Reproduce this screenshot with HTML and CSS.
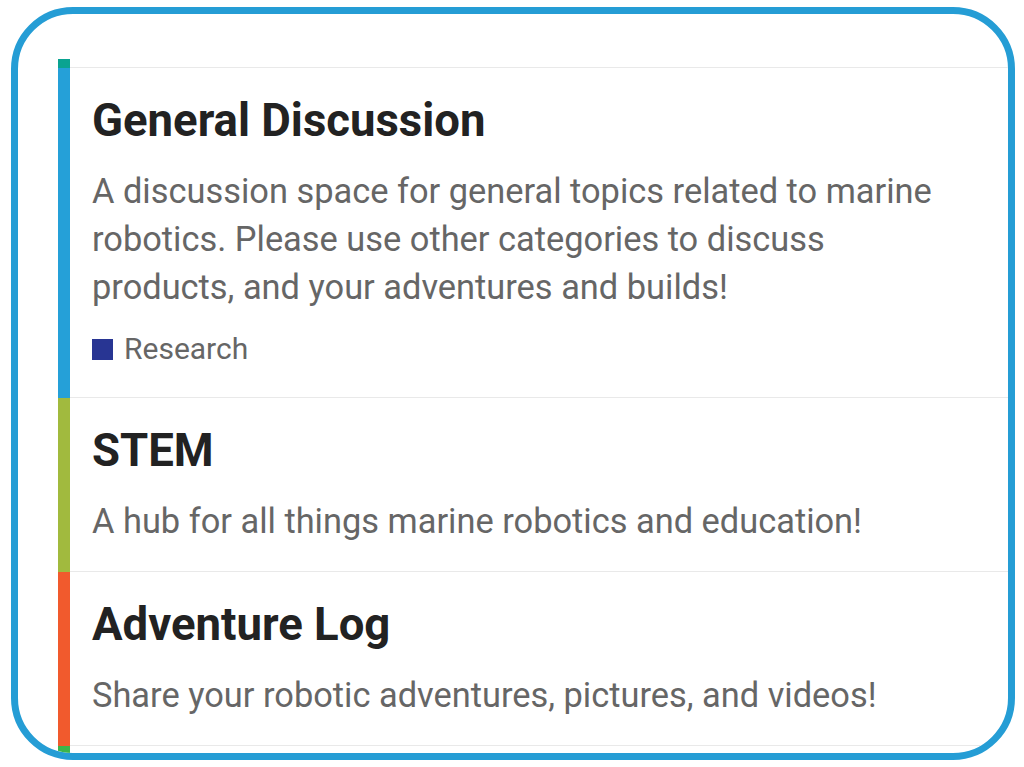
FILE: index.html
```html
<!DOCTYPE html>
<html>
<head>
<meta charset="utf-8">
<link rel="stylesheet" href="styles.css">
</head>
<body>
<div class="frame">
  <div class="list">
    <div class="row row-stub">
      <div class="bar bar-teal"></div>
      <div class="cell"></div>
    </div>
    <div class="row">
      <div class="bar bar-blue"></div>
      <div class="cell">
        <h3 class="title">General Discussion</h3>
        <p class="desc">A discussion space for general topics related to marine robotics. Please use other categories to discuss products, and your adventures and builds!</p>
        <div class="sub"><span class="swatch"></span><span class="sub-name">Research</span></div>
      </div>
    </div>
    <div class="row">
      <div class="bar bar-lime"></div>
      <div class="cell">
        <h3 class="title">STEM</h3>
        <p class="desc">A hub for all things marine robotics and education!</p>
      </div>
    </div>
    <div class="row">
      <div class="bar bar-orange"></div>
      <div class="cell">
        <h3 class="title">Adventure Log</h3>
        <p class="desc">Share your robotic adventures, pictures, and videos!</p>
      </div>
    </div>
    <div class="row">
      <div class="bar bar-green"></div>
      <div class="cell cell-next"></div>
    </div>
  </div>
</div>
</body>
</html>
```

FILE: styles.css
```css
html, body {
  margin: 0;
  padding: 0;
  background: #ffffff;
}

body {
  font-family: Roboto, "Liberation Sans", sans-serif;
  padding: 7px 9px 7px 11px;
}

.frame {
  box-sizing: border-box;
  width: 1004px;
  height: 753px;
  border: 7px solid #259dd5;
  border-radius: 62px;
  overflow: hidden;
  padding: 45px 0 0 40px;
  background: #ffffff;
}

.list {
  width: 1000px;
  display: flex;
  flex-direction: column;
}

.row {
  display: flex;
}

.bar {
  width: 12px;
  flex: 0 0 12px;
}

.bar-teal { background: #0aa391; }
.bar-blue { background: #25a0d8; }
.bar-lime { background: #a1ba3e; }
.bar-orange { background: #f15a2d; }
.bar-green { background: #3cb54a; }

.cell {
  flex: 1;
  border-bottom: 1px solid #e9e9e9;
  padding: 27px 22px 26px 22px;
}

.row-stub .cell {
  height: 8px;
  padding: 0;
}

.cell-next {
  height: 40px;
  padding: 0;
  border-bottom: none;
}

.title {
  margin: 0;
  font-size: 45.5px;
  line-height: 52px;
  font-weight: 700;
  color: #222222;
}

.desc {
  margin: 20px 0 0 0;
  font-size: 34.4px;
  line-height: 48px;
  color: #666666;
  max-width: 860px;
}

.row-mid .cell {
  padding-bottom: 27px;
}

.sub {
  display: flex;
  align-items: center;
  gap: 11px;
  margin: 18px 0 2px 0;
  height: 40px;
}

.swatch {
  width: 21px;
  height: 21px;
  background: #283593;
}

.sub-name {
  font-size: 30px;
  line-height: 40px;
  color: #666666;
}
```
